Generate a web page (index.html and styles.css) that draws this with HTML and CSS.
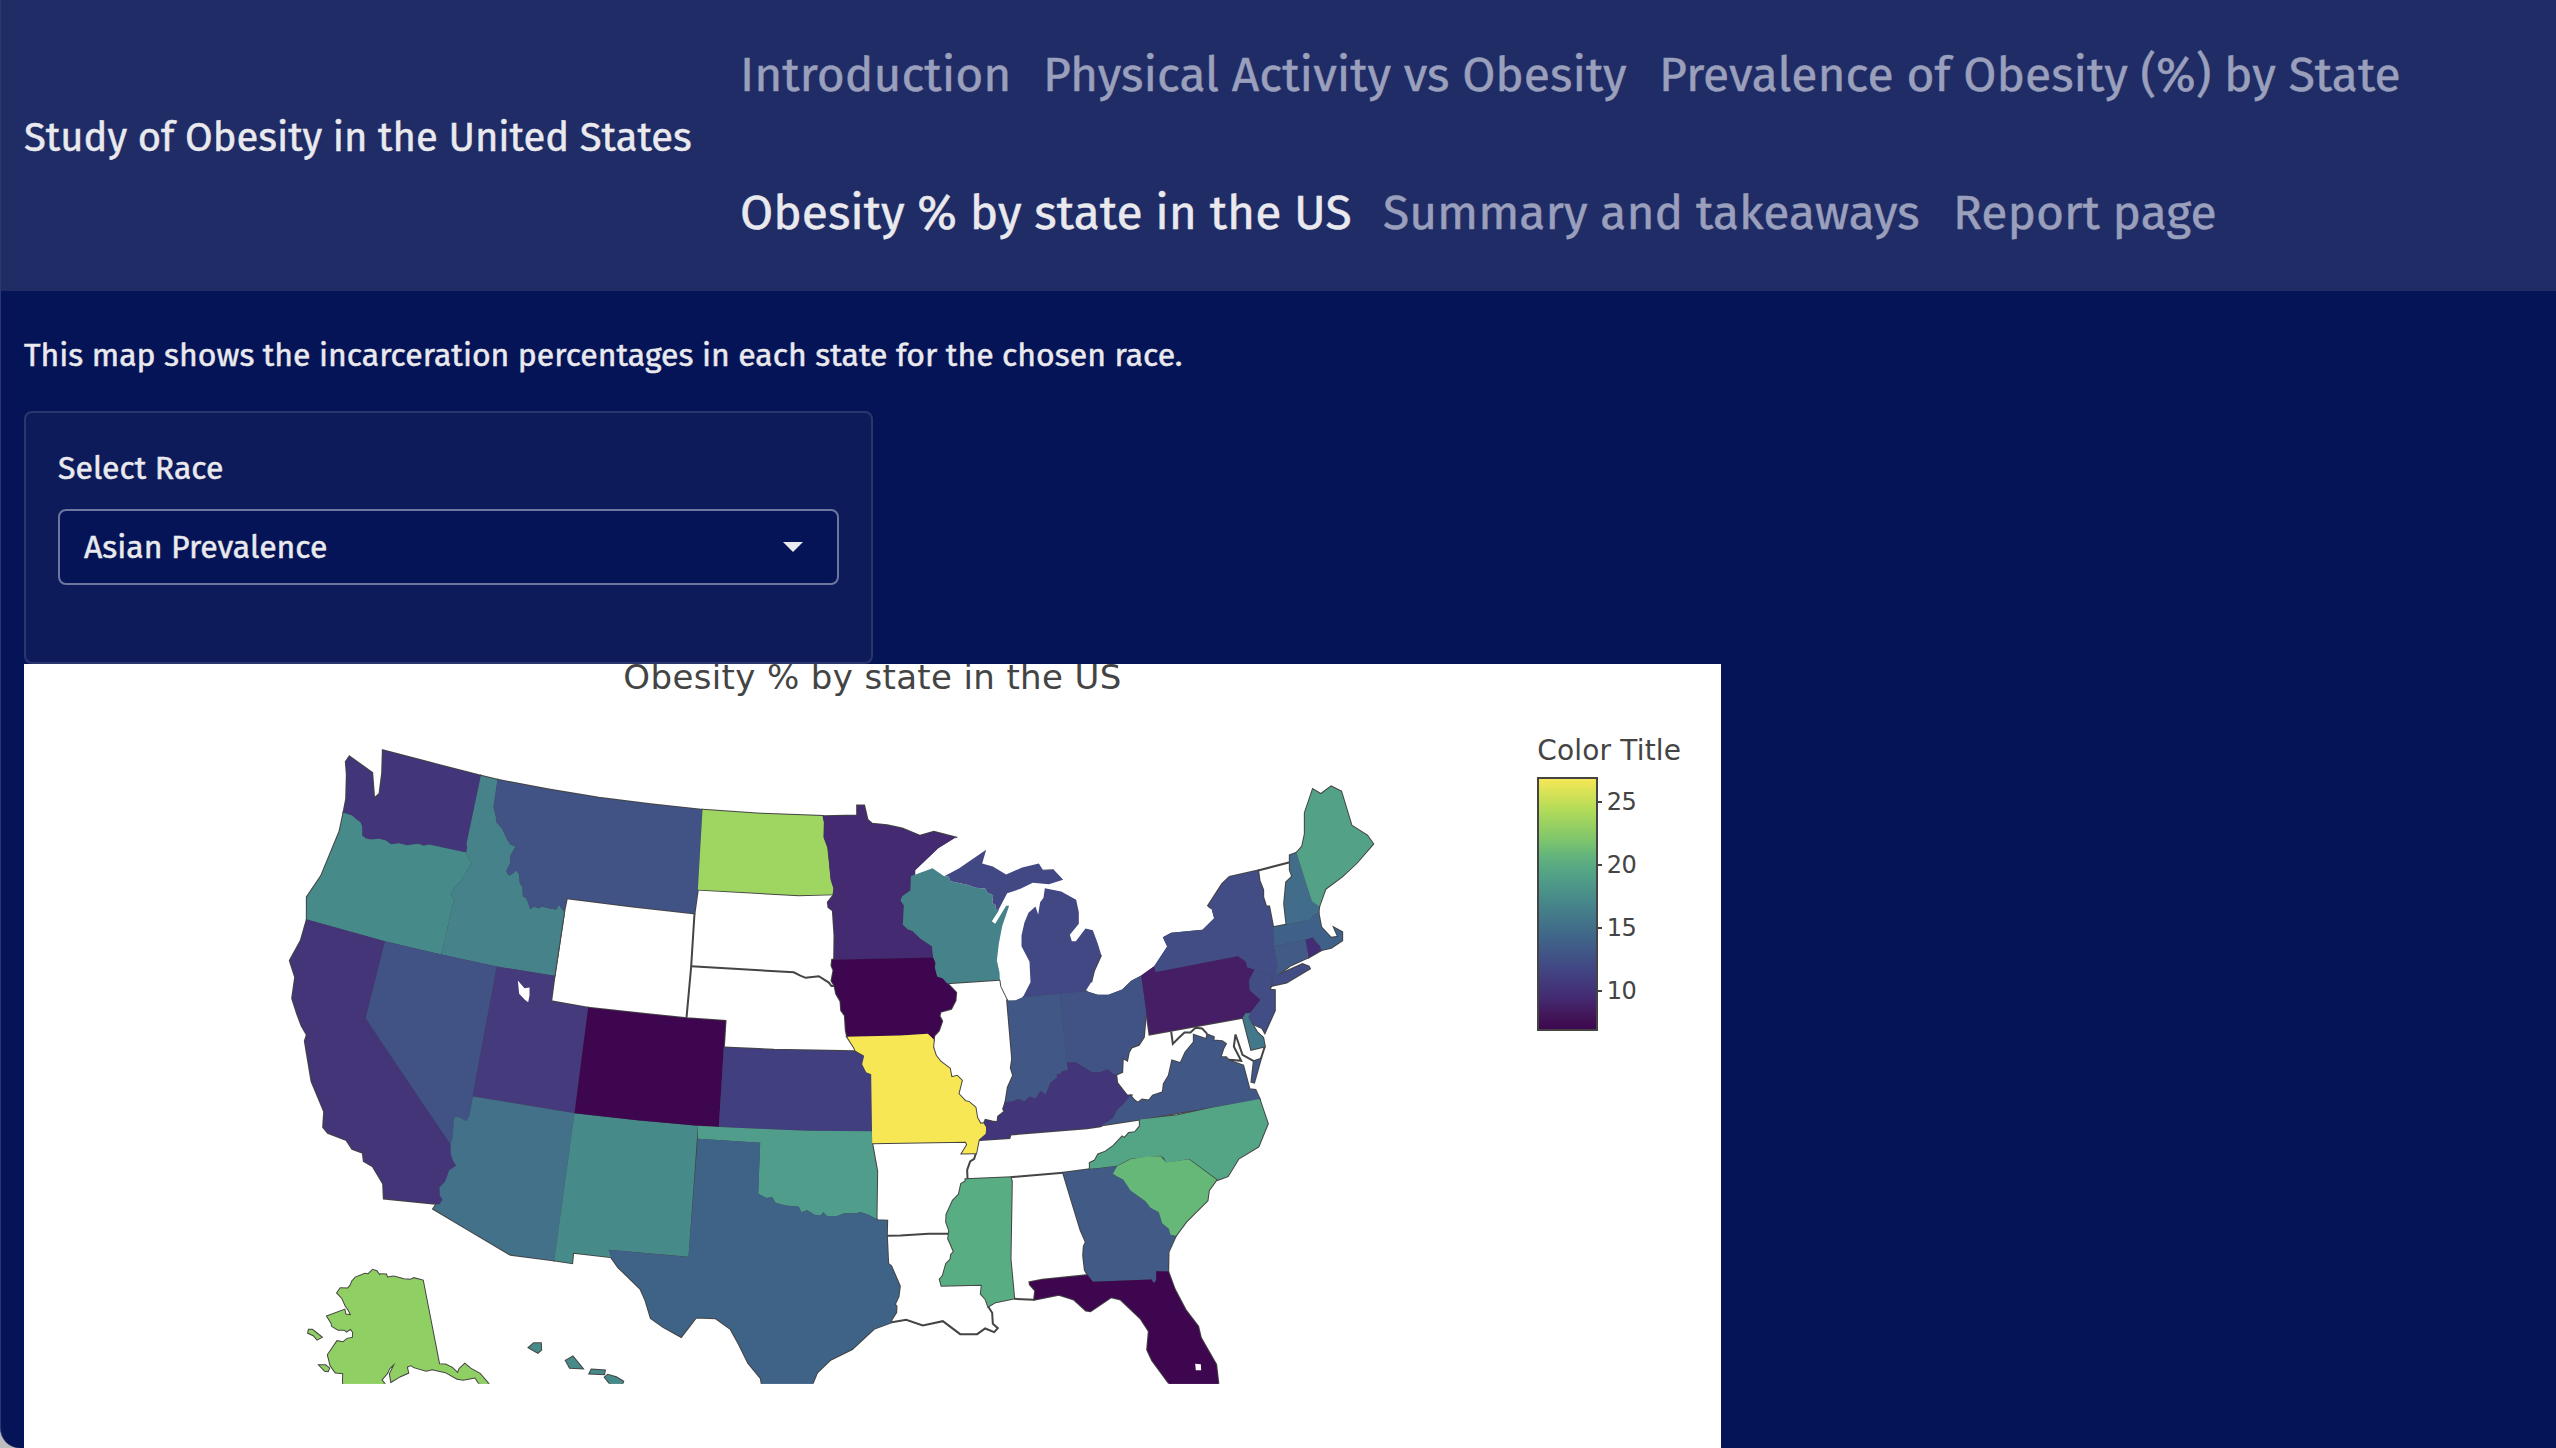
FILE: index.html
```html
<!DOCTYPE html>
<html lang="en">
<head>
<meta charset="utf-8">
<title>Study of Obesity in the United States</title>
<link rel="stylesheet" href="styles.css">
</head>
<body>
<div class="window">
  <header class="navbar">
    <div class="brand">Study of Obesity in the United States</div>
    <nav class="nav">
      <div class="nav-row">
        <a class="link link-intro">Introduction</a>
        <a class="link link-activity">Physical Activity vs Obesity</a>
        <a class="link link-prevalence">Prevalence of Obesity (%) by State</a>
      </div>
      <div class="nav-row">
        <a class="link link-map active">Obesity % by state in the US</a>
        <a class="link link-summary">Summary and takeaways</a>
        <a class="link link-report">Report page</a>
      </div>
    </nav>
  </header>
  <main class="content">
    <p class="lead">This map shows the incarceration percentages in each state for the chosen race.</p>
    <section class="well">
      <div class="label">Select Race</div>
      <div class="select"><span class="value">Asian Prevalence</span><span class="caret"></span></div>
    </section>
    <section class="plot">
      <svg class="chart" viewBox="72 1992 5091 2352" width="1697" height="784">
        <defs>
          <clipPath id="frame"><rect x="72" y="1992" width="5091" height="2159"/></clipPath>
          <linearGradient id="viridis" x1="0" y1="1" x2="0" y2="0">
            <stop offset="0" stop-color="#3d064f"/>
            <stop offset=".06" stop-color="#421759"/>
            <stop offset=".125" stop-color="#442a71"/>
            <stop offset=".25" stop-color="#414884"/>
            <stop offset=".376" stop-color="#406789"/>
            <stop offset=".5" stop-color="#46858a"/>
            <stop offset=".627" stop-color="#54a486"/>
            <stop offset=".69" stop-color="#63b47c"/>
            <stop offset=".753" stop-color="#7dc56c"/>
            <stop offset=".878" stop-color="#b4dc58"/>
            <stop offset="1" stop-color="#f8e755"/>
          </linearGradient>
          <g id="states">
            <g transform="translate(810 2160)">
              <path fill="#43357a" d="M237,108L305,157 311,234 327,220 335,158 337,89 480,127 631,166 588,370 590,380 587,396 475,372 460,376 443,370 410,374 385,368 362,371 345,359 325,355 300,357 285,353 275,345 275,318 270,305 258,297 245,285 219,277 227,235 229,162 226,124Z"/>
              <path fill="#468b89" d="M219,277L245,285 258,297 270,305 275,318 275,345 285,353 300,357 325,355 345,359 362,371 385,368 410,374 443,370 460,376 475,372 587,396 592,410 603,428 588,452 570,484 555,498 545,512 542,522 551,540 543,565 530,625 512,702 343,662 109,597 109,530 152,466 207,333Z"/>
              <path fill="#45828a" d="M631,166L681,178 669,260 676,288 678,305 695,325 710,357 720,372 735,378 720,405 718,430 708,450 710,460 718,465 738,450 746,463 748,488 756,500 757,527 767,533 773,546 779,566 790,558 803,563 815,558 840,565 857,567 866,552 873,565 881,573 852,766 679,738 512,702 530,625 543,565 551,540 542,522 545,512 555,498 570,484 588,452 603,428 592,410 587,396 590,380 588,370Z"/>
              <path fill="#415284" d="M681,178L835,207 985,232 1140,251 1296,268 1282,507 1272,579 1080,557 889,533 881,573 873,565 866,552 857,567 840,565 815,558 803,563 790,558 779,566 773,546 767,533 757,527 756,500 748,488 746,463 738,450 718,465 710,460 708,450 718,430 720,405 735,378 720,372 710,357 695,325 678,305 676,288 669,260Z"/>
              <path fill="#415284" d="M343,662L512,702 679,738 615,1080 607,1128 597,1185 587,1202 570,1192 555,1188 550,1197 548,1230 545,1258 540,1272 410,1080 285,893Z"/>
              <path fill="#443579" d="M109,597L343,662 285,893 410,1080 540,1272 541,1300 547,1320 557,1335 536,1349 524,1383 507,1400 508,1425 516,1438 507,1451 340,1434 338,1390 307,1338 280,1322 277,1297 245,1285 228,1259 172,1237 158,1220 161,1173 123,1082 103,962 109,943 93,915 80,880 65,834 74,770 58,720 91,660Z"/>
              <path fill="#453a7c" d="M679,738L852,766 842,842 953,862 912,1178 607,1128 615,1080Z"/>
              <path fill="#43718a" d="M607,1128L912,1178 851,1620 720,1603 580,1520 488,1465 497,1452 507,1451 516,1438 508,1425 507,1400 524,1383 536,1349 557,1335 547,1320 541,1300 540,1272 545,1258 548,1230 550,1197 555,1188 570,1192 587,1202 597,1185Z"/>
              <path fill="#468a89" d="M912,1178L1100,1199 1282,1216 1254,1609 1015,1588 1022,1610 908,1597 905,1628 851,1620Z"/>
              <path fill="#3d064f" d="M953,862L1140,882 1250,893 1365,901 1345,1219 1282,1216 1100,1199 912,1178Z"/>
            </g>
            <g transform="translate(810 3000)">
              <path fill="#90cf64" d="M307,808L318,812 328,825 330,821 347,822 350,831 370,828 400,836 420,838 430,833 457,840 506,1091 525,1092 545,1102 562,1118 567,1105 583,1090 600,1104 628,1120 655,1151 670,1170 640,1170 614,1131 578,1138 560,1135 525,1115 485,1106 467,1111 430,1100 422,1094 409,1099 413,1117 388,1128 362,1144 358,1120 375,1086 357,1103 350,1118 333,1138 343,1151 343,1170 217,1170 218,1118 195,1116 180,1095 172,1063 200,1022 218,1025 230,1015 247,1012 248,995 240,985 228,993 222,988 203,988 185,977 183,968 170,947 222,928 225,942 242,944 235,930 225,915 215,893 200,877 210,863 232,864 240,855 245,842 255,831 283,820 293,821Z"/>
              <path fill="#90cf64" d="M115,988L125,988 138,998 153,1010 140,1017 130,1005 113,997ZM147,1094L165,1094 176,1103 172,1112 163,1111Z"/>
              <path fill="#468b89" d="M775,1041L790,1028 811,1028 812,1048 802,1057ZM886,1080L907,1068 936,1104 898,1102ZM963,1107L1003,1110 1001,1121 957,1119ZM1003,1130L1012,1123 1037,1130 1058,1143 1050,1165 1030,1165Z"/>
            </g>
            <g transform="translate(1980 2340) scale(1 1.18622)">
              <path fill="#9fd662" d="M126,74L300,84 487,90 491,105 490,145 500,168 505,205 510,245 519,272 516,288 415,290 112,276Z"/>
              <path fill="#413f7f" d="M190,675L340,681 583,685 595,693 611,696 611,705 605,718 615,736 632,744 634,887 440,886 330,882 175,876Z"/>
              <path fill="#4f9d8a" d="M112,873L175,876 330,882 440,886 634,887 635,918 650,988 648,1109 625,1099 600,1091 590,1094 550,1095 528,1102 500,1102 488,1092 480,1101 462,1098 440,1087 422,1092 415,1078 375,1075 345,1068 335,1054 318,1056 293,1045 299,916 112,906Z"/>
              <path fill="#3f6287" d="M112,906L299,916 293,1045 318,1056 335,1054 345,1068 375,1075 415,1078 422,1092 440,1087 462,1098 480,1101 488,1092 500,1102 528,1102 550,1095 590,1094 600,1091 625,1099 648,1109 650,1112 680,1113 679,1150 683,1222 692,1228 718,1279 714,1305 703,1325 708,1330 707,1345 692,1365 694,1370 640,1387 575,1438 510,1465 470,1497 455,1528 450,1545 307,1545 301,1512 263,1473 235,1425 210,1387 165,1360 107,1358 62,1407 8,1382 -29,1360 -45,1315 -60,1286 -127,1231 -148,1206 -155,1187 84,1205Z"/>
            </g>
            <g transform="translate(2460 2340)">
              <path fill="#432a71" d="M6,107L110,105 110,75 131,75 141,118 155,130 200,134 245,144 299,166 340,154 405,171 353,203 284,269 284,280 271,287 270,329 245,347 240,360 250,375 247,433 262,447 275,451 300,475 334,497 338,531 41,538 42,465 37,390 24,380 22,365 38,345 39,325 30,297 22,205 9,170 10,125Z"/>
              <path fill="#3d064f" d="M35,538L338,531 345,547 343,560 350,588 366,593 380,608 407,636 405,660 392,685 360,694 357,707 365,722 355,751 341,766 340,777 322,760 240,765 80,769 76,750 73,705 62,690 60,662 47,640 42,616 33,601 39,570 33,555Z"/>
              <path fill="#f8e755" d="M80,769L240,765 322,760 340,777 338,800 346,825 360,843 388,864 393,890 410,886 424,900 414,940 435,962 445,964 465,981 470,1012 480,1030 492,1028 497,1040 496,1060 475,1078 467,1118 424,1119 440,1093 436,1084 250,1087 155,1088 152,881 137,875 125,851 131,826 105,811 100,800Z"/>
              <path fill="#415786" d="M560,660L585,660 607,650 718,638 739,840 743,868 725,872 720,880 709,881 709,892 690,907 675,943 660,931 645,955 628,948 612,963 592,955 580,962 555,965 562,920 578,885 571,862 575,835Z"/>
              <path fill="#415285" d="M718,638L795,632 832,643 864,643 905,627 932,601 962,585 977,692 970,770 955,793 933,801 925,815 920,840 907,832 905,875 885,883 875,880 862,866 840,875 815,875 790,860 765,845 739,846Z"/>
              <path fill="#43357a" d="M739,846L765,845 790,860 815,875 840,875 862,866 875,880 887,883 890,907 908,930 920,945 932,945 905,975 890,988 878,1012 860,1025 840,1037 800,1043 570,1062 567,1073 475,1079 496,1060 497,1040 490,1030 495,1018 515,1023 531,1025 533,1008 552,993 548,985 555,965 580,962 592,955 612,963 628,948 645,955 660,931 675,943 690,907 709,892 709,881 720,880 725,872 743,868Z"/>
            </g>
            <g transform="translate(3240 2400)">
              <path fill="#414d84" d="M533,210L447,229 425,250 383,315 393,325 401,353 366,388 272,397 247,410 260,438 221,497 225,515 472,467 495,483 500,500 522,508 575,527 575,556 618,546 688,504 685,498 666,491 590,525 592,505 580,437 578,380 566,318 557,318 548,290 548,268 537,240Z"/>
              <path fill="#451e66" d="M221,497L182,525 207,702 490,651 495,638 510,636 540,598 508,570 505,540 522,508 500,500 495,483 472,467 225,515Z"/>
              <path fill="#414d84" d="M522,508L575,527 573,555 567,568 583,569 583,630 553,697 545,683 520,672 502,650 510,636 540,598 508,570 505,540Z"/>
              <path fill="#43788a" d="M487,651L495,638 510,638 503,650 530,695 548,712 553,738 512,748Z"/>
              <path fill="#3f6088" d="M578,380L620,372 690,357 700,342 714,337 722,380 752,412 773,409 761,382 785,395 785,420 752,442 722,449 712,430 697,411 675,418 580,437Z"/>
              <path fill="#415a86" d="M580,437L675,418 685,470 630,495 590,525 585,508 592,505Z"/>
              <path fill="#432d75" d="M675,418L697,411 705,425 718,435 722,449 685,471Z"/>
              <path fill="#416d8b" d="M628,164L648,157 694,302 716,318 714,337 700,342 690,357 618,372 611,310 617,245 635,228 628,208Z"/>
              <path fill="#53a287" d="M648,157L665,138 673,100 673,37 697,-34 721,-19 752,-42 782,-27 813,75 860,105 878,130 828,188 785,228 735,265 716,318 694,302Z"/>
              <path fill="#415886" d="M340,703L378,716 380,702 400,710 398,720 425,722 436,730 428,745 420,770 437,770 445,780 488,795 507,866 525,868 538,897 390,921 178,957 60,975 80,965 98,952 110,928 125,915 150,885 160,898 172,907 185,897 205,900 217,885 247,875 250,850 265,825 275,780 300,788 315,755 340,725ZM520,782L541,775 521,846 513,844Z"/>
            </g>
            <g transform="translate(3300 2280) scale(1 1.0714)">
              <path fill="#53a586" d="M118,1005L230,993 330,973 477,948 502,1017 474,1081 414,1115 382,1164 352,1174 267,1116 197,1126 190,1113 180,1107 90,1115 50,1135 0,1140 -32,1143 -32,1127 -17,1120 -7,1103 15,1095 40,1078 65,1053 72,1057 85,1043 103,1041 118,1024Z"/>
            </g>
            <g transform="translate(2700 3240)">
              <path fill="#415a86" d="M488,277L568,266 650,257 637,280 650,288 668,297 690,330 735,362 750,382 775,395 785,428 805,445 810,463 826,466 804,515 803,573 767,572 767,600 760,608 753,597 577,604 562,584 553,568 548,525 550,497 556,485 540,448 510,350Z"/>
              <path fill="#66b879" d="M948,298L925,330 921,360 857,424 826,466 810,463 805,445 785,428 775,395 750,382 735,362 690,330 668,297 650,288 637,280 650,257 690,236 740,228 780,227 797,246 865,236Z"/>
              <path fill="#3d064f" d="M387,605L425,598 562,584 577,604 753,597 760,608 767,600 767,572 803,573 823,627 855,688 893,738 901,772 947,852 956,930 820,930 808,912 755,840 740,808 745,752 720,714 660,657 632,650 570,692 556,690 520,657 475,643 401,658 404,630 388,612Z"/>
              <path fill="#58ae82" d="M195,296L330,290 334,303 330,535 341,654 285,665 263,678 255,656 241,640 244,613 123,616 118,597 127,585 137,550 150,537 152,522 160,514 150,490 143,475 146,450 137,425 138,402 157,360 175,342 182,310 195,303Z"/>
            </g>
          </g>
          <g id="lakeside">
            <g transform="translate(2460 2340)">
              <path fill="#45828a" d="M271,287L336,263 371,287 384,287 390,302 440,313 465,322 494,324 500,336 518,344 515,369 524,371 526,385 535,390 514,422 524,430 557,376 566,376 545,437 535,490 529,540 537,575 538,598 380,608 366,593 350,588 343,560 345,547 338,531 334,497 300,475 275,451 262,447 247,433 250,375 240,360 245,347 270,329Z"/>
              <path fill="#424884" d="M371,287L415,264 497,208 485,249 517,258 557,282 605,261 655,249 668,269 700,268 728,298 685,311 637,307 600,325 560,338 533,390 526,385 524,371 515,369 518,344 500,336 494,324 465,322 440,313 390,302 384,287ZM673,323L722,333 767,358 775,395 775,430 748,463 754,482 766,482 795,444 817,449 832,490 842,523 820,572 812,605 795,632 718,640 607,650 630,605 627,544 603,497 603,465 612,425 624,397 645,378 653,402 659,365 669,352Z"/>
            </g>
          </g>
        </defs>
        <g clip-path="url(#frame)">
          <g transform="translate(1.5 1.5)">
            <use class="outline" href="#states"/>
            <g class="outline lines">
              <path transform="translate(810 2160)" d="M1272,579L1262,738 1248,892M881,573L852,766"/>
              <path transform="translate(1980 2340) scale(1 1.18622)" d="M92,470L400,485 418,493 435,499 475,495 505,511 513,520 521,520"/>
              <path transform="translate(2700 3240)" d="M226,219L221,235 209,243 200,268 201,295M330,290L488,277M341,655L401,658M145,460L85,460 0,465 -41,466M263,678L275,697 277,730 292,743 281,755 254,744 230,761 179,761 127,722 67,735 17,718 -26,725"/>
              <path transform="translate(3240 2400)" d="M533,210L628,185M272,693L277,730 295,712 312,696 330,696 345,682 365,684 380,700M553,738L541,775M437,777L482,781 460,738 465,702 486,763 520,782M197,632L193,636"/>
              <path transform="translate(2460 2340)" d="M538,598L380,608M842,523L820,572 812,605M405,171L353,203"/>
            </g>
            <path class="thin" transform="translate(2460 2340)" d="M668,269L700,268"/>
            <g class="water">
              <path transform="translate(2460 2340)" d="M800,632L832,643 864,643 905,627 932,601 962,585 1001,557 1040,498 1027,470 1052,457 1146,448 1181,413 1173,385 1100,380 900,560ZM562,661L585,660 607,650 600,600 560,640ZM405,171L353,203 284,269 284,284 330,262 410,190Z"/>
            </g>
            <use href="#states"/>
            <use href="#lakeside"/>
            <path class="thin" transform="translate(2460 2340)" d="M538,598L541,618 562,661"/>
            <g class="water">
              <path transform="translate(810 2160)" d="M742,780L762,803 777,801 777,825 773,845 763,838 746,820Z"/>
              <path transform="translate(2700 3240)" d="M884,850L901,851 902,869 886,869Z"/>
            </g>
          </g>
        </g>
        <g class="legend">
          <rect class="bar" x="4614" y="2334" width="177" height="756" fill="url(#viridis)"/>
          <path class="ticks" d="M4794,2406h12M4794,2595h12M4794,2784h12M4794,2973h12"/>
          <text class="legend-title" x="4612" y="2280" textLength="431">Color Title</text>
          <text x="4820" y="2430" textLength="90">25</text>
          <text x="4820" y="2619" textLength="90">20</text>
          <text x="4820" y="2808" textLength="90">15</text>
          <text x="4820" y="2997" textLength="90">10</text>
        </g>
        <text class="chart-title" x="1870" y="2066" textLength="1494">Obesity % by state in the US</text>
      </svg>
    </section>
  </main>
</div>
</body>
</html>
```
FILE: styles.css
```css
* { box-sizing: border-box; }

body {
  margin: 0;
  background: #bdbdbd;
  font-family: "Fira Sans", "Noto Sans", sans-serif;
  font-size: 32px;
  color: #e9e9ee;
  -webkit-text-stroke: 0.5px currentColor;
}

.window {
  height: 1448px;
  overflow: hidden;
  background: #051456;
  border-left: 1px solid #2b386f;
  border-bottom-left-radius: 20px;
}

.navbar {
  display: flex;
  align-items: center;
  height: 291px;
  padding: 0 0 3px 23px;
  background: #1f2c66;
}

.brand {
  width: 716px;
  padding-bottom: 12px;
  font-size: 40px;
  white-space: nowrap;
}

.nav { display: flex; flex-direction: column; }

.nav-row {
  display: flex;
  align-items: center;
  height: 138px;
}

.link {
  font-size: 48px;
  white-space: nowrap;
  color: #9a9fbc;
}

.link.active { color: #e9e9ee; }
.link-intro { width: 303px; }
.link-activity { width: 616px; }
.link-map { width: 643px; }
.link-summary { width: 570px; }

.content { padding-left: 23px; }

.lead {
  margin: 0;
  height: 120px;
  padding-top: 42px;
  line-height: 44px;
}

.well {
  width: 849px;
  height: 253px;
  padding: 33px 32px 0;
  background: #0d1b5a;
  border: 2px solid #2a376d;
  border-radius: 8px;
}

.label { height: 63px; line-height: 44px; }

.select {
  display: flex;
  align-items: center;
  justify-content: space-between;
  height: 76px;
  padding: 0 34px 0 24px;
  background: #051456;
  border: 2px solid #6d769f;
  border-radius: 8px;
}

.caret {
  border: 10px solid transparent;
  border-top-color: #e9e9ee;
  border-bottom: 0;
}

.plot { width: 1697px; height: 784px; background: #fff; }

.chart { display: block; }

.chart path { vector-effect: non-scaling-stroke; }

.outline { stroke: #444; stroke-width: 2px; }

.lines { fill: none; }

.thin { fill: none; stroke: #444; stroke-width: 1px; }

.water { fill: #fff; }

.chart text {
  font-family: Verdana, "DejaVu Sans", sans-serif;
  font-size: 72px;
  fill: #444;
  -webkit-text-stroke: 0;
}

.chart .legend-title { font-size: 84px; }

.chart .chart-title { font-size: 102px; }

.bar { stroke: #444; stroke-width: 6px; }

.ticks { stroke: #444; stroke-width: 2px; }
```
